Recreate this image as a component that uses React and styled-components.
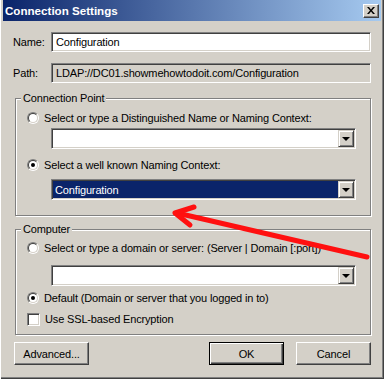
import React from 'react'
import styled, { createGlobalStyle } from 'styled-components'

const GlobalStyle = createGlobalStyle`
  html, body {
    margin: 0;
    padding: 0;
    background: #d4d0c8;
  }
  body {
    font-family: "Liberation Sans", Arial, sans-serif;
    font-size: 11px;
    letter-spacing: -0.15px;
    color: #000;
  }
`

const Window = styled.div`
  position: relative;
  width: 384px;
  height: 379px;
  box-sizing: border-box;
  padding: 0 3px 3px 3px;
  background: #d4d0c8;
  box-shadow: inset 1px 0 #fff, inset -1px -1px #404040, inset -2px -2px #808080;
  display: flex;
  flex-direction: column;
  overflow: hidden;
`

const TitleBar = styled.div`
  height: 21px;
  display: flex;
  align-items: center;
  justify-content: space-between;
  padding: 0 2px;
  background: linear-gradient(to right, #0a246a, #a6caf0);
`

const TitleText = styled.span`
  color: #fff;
  font-weight: bold;
  font-size: 11.6px;
  letter-spacing: 0;
`

const CloseButton = styled.div`
  width: 16px;
  height: 14px;
  box-sizing: border-box;
  display: flex;
  align-items: center;
  justify-content: center;
  background: #d4d0c8;
  border: 1px solid;
  border-color: #fff #404040 #404040 #fff;
  box-shadow: inset -1px -1px #808080;
`

const Body = styled.div`
  display: flex;
  flex-direction: column;
  padding: 11px 10px 0 10px;
`

const FieldRow = styled.div`
  display: flex;
  align-items: center;
  height: 20px;
  margin-top: ${p => p.$gap || 0}px;
`

const FieldLabel = styled.span`
  width: 38px;
  flex-shrink: 0;
`

const TextBox = styled.div`
  flex: 1;
  height: 20px;
  box-sizing: border-box;
  display: flex;
  align-items: center;
  padding: 0 4px;
  background: ${p => (p.$readOnly ? '#d4d0c8' : '#fff')};
  border: 1px solid;
  border-color: #808080 #fff #fff #808080;
  box-shadow: inset 1px 1px #404040, inset -1px -1px #d4d0c8;
  white-space: nowrap;
  overflow: hidden;
`

const Frame = styled.div`
  position: relative;
  margin-top: ${p => p.$gap}px;
  margin-left: 2px;
  padding: ${p => p.$padTop}px 14px ${p => p.$padBottom}px 11px;
  border: 1px solid #808080;
  box-shadow: 1px 1px #fff, inset 1px 1px #fff;
  display: flex;
  flex-direction: column;
`

const FrameCaption = styled.span`
  position: absolute;
  top: -8px;
  left: 5px;
  padding: 0 2px;
  line-height: 14px;
  background: #d4d0c8;
`

const OptionRow = styled.label`
  display: flex;
  align-items: center;
  gap: 5px;
  height: 14px;
  margin-top: ${p => p.$gap || 0}px;
  white-space: nowrap;
`

const RadioOuter = styled.span`
  width: 12px;
  height: 12px;
  box-sizing: border-box;
  flex-shrink: 0;
  border-radius: 50%;
  border: 1px solid;
  border-color: #808080 #fff #fff #808080;
  display: flex;
`

const RadioInner = styled.span`
  flex: 1;
  border-radius: 50%;
  border: 1px solid;
  border-color: #404040 #d4d0c8 #d4d0c8 #404040;
  background: #fff;
  display: flex;
  align-items: center;
  justify-content: center;
`

const RadioDot = styled.span`
  width: 4px;
  height: 4px;
  border-radius: 50%;
  background: #000;
`

const CheckBox = styled.span`
  width: 13px;
  height: 13px;
  box-sizing: border-box;
  flex-shrink: 0;
  background: #fff;
  border: 1px solid;
  border-color: #808080 #fff #fff #808080;
  box-shadow: inset 1px 1px #404040, inset -1px -1px #d4d0c8;
`

const Combo = styled.div`
  height: 21px;
  box-sizing: border-box;
  margin: ${p => p.$gap}px 0 0 24px;
  padding: 2px;
  display: flex;
  background: #fff;
  border: 1px solid;
  border-color: #808080 #fff #fff #808080;
  box-shadow: inset 1px 1px #404040, inset -1px -1px #d4d0c8;
`

const ComboValue = styled.div`
  flex: 1;
  display: flex;
  align-items: center;
  padding: 0 2px;
  margin: -1px 0 -1px -1px;
  background: ${p => (p.$selected ? '#0a246a' : '#fff')};
  color: ${p => (p.$selected ? '#fff' : '#000')};
`

const DropButton = styled.div`
  width: 16px;
  box-sizing: border-box;
  margin: -1px -1px -1px 0;
  display: flex;
  align-items: center;
  justify-content: center;
  background: #d4d0c8;
  border: 1px solid;
  border-color: #d4d0c8 #404040 #404040 #d4d0c8;
  box-shadow: inset 1px 1px #fff, inset -1px -1px #808080;
`

const DownTriangle = styled.span`
  width: 0;
  height: 0;
  border-left: 4px solid transparent;
  border-right: 4px solid transparent;
  border-top: 4px solid #000;
`

const ButtonBar = styled.div`
  display: flex;
  margin-top: 7px;
  margin-left: 1px;
  gap: 12px;
`

const Button = styled.div`
  width: 75px;
  height: 23px;
  box-sizing: border-box;
  display: flex;
  align-items: center;
  justify-content: center;
  background: #d4d0c8;
  border: 1px solid;
  border-color: ${p => (p.$default ? '#000' : '#fff #404040 #404040 #fff')};
  box-shadow: ${p =>
    p.$default
      ? 'inset 1px 1px #fff, inset -1px -1px #404040, inset -2px -2px #808080'
      : 'inset -1px -1px #808080'};
  margin-left: ${p => (p.$push ? 'auto' : '0')};
`

const ArrowOverlay = styled.svg`
  position: absolute;
  left: 0;
  top: 0;
  pointer-events: none;
`

const Radio = ({ checked }) => (
  <RadioOuter>
    <RadioInner>{checked && <RadioDot />}</RadioInner>
  </RadioOuter>
)

const ComboBox = ({ gap, value, selected }) => (
  <Combo $gap={gap}>
    <ComboValue $selected={selected}>{value}</ComboValue>
    <DropButton>
      <DownTriangle />
    </DropButton>
  </Combo>
)

export default function App() {
  return (
    <>
      <GlobalStyle />
      <Window>
        <TitleBar>
          <TitleText>Connection Settings</TitleText>
          <CloseButton>
            <svg width="8" height="7" viewBox="0 0 8 7">
              <path d="M0 0h2l2 2.5L6 0h2L5 3.5 8 7H6L4 4.5 2 7H0l3-3.5z" fill="#000" />
            </svg>
          </CloseButton>
        </TitleBar>

        <Body>
          <FieldRow>
            <FieldLabel>Name:</FieldLabel>
            <TextBox>Configuration</TextBox>
          </FieldRow>
          <FieldRow $gap={11}>
            <FieldLabel>Path:</FieldLabel>
            <TextBox $readOnly>LDAP://DC01.showmehowtodoit.com/Configuration</TextBox>
          </FieldRow>

          <Frame $gap={15} $padTop={12} $padBottom={15}>
            <FrameCaption>Connection Point</FrameCaption>
            <OptionRow>
              <Radio />
              Select or type a Distinguished Name or Naming Context:
            </OptionRow>
            <ComboBox gap={3} value="" />
            <OptionRow $gap={9}>
              <Radio checked />
              Select a well known Naming Context:
            </OptionRow>
            <ComboBox gap={7} value="Configuration" selected />
          </Frame>

          <Frame $gap={13} $padTop={11} $padBottom={8}>
            <FrameCaption>Computer</FrameCaption>
            <OptionRow>
              <Radio />
              Select or type a domain or server: (Server | Domain [:port])
            </OptionRow>
            <ComboBox gap={10} value="" />
            <OptionRow $gap={5}>
              <Radio checked />
              Default (Domain or server that you logged in to)
            </OptionRow>
            <OptionRow $gap={7}>
              <CheckBox />
              Use SSL-based Encryption
            </OptionRow>
          </Frame>

          <ButtonBar>
            <Button>Advanced...</Button>
            <Button $default $push>OK</Button>
            <Button>Cancel</Button>
          </ButtonBar>
        </Body>

        <ArrowOverlay width="384" height="379" viewBox="0 0 384 379">
          <g stroke="#ff1010" strokeWidth="5" strokeLinecap="round" fill="none">
            <line x1="367" y1="257" x2="177" y2="213" />
            <polyline points="194,207 175,213 190,225" strokeLinejoin="round" />
          </g>
        </ArrowOverlay>
      </Window>
    </>
  )
}
